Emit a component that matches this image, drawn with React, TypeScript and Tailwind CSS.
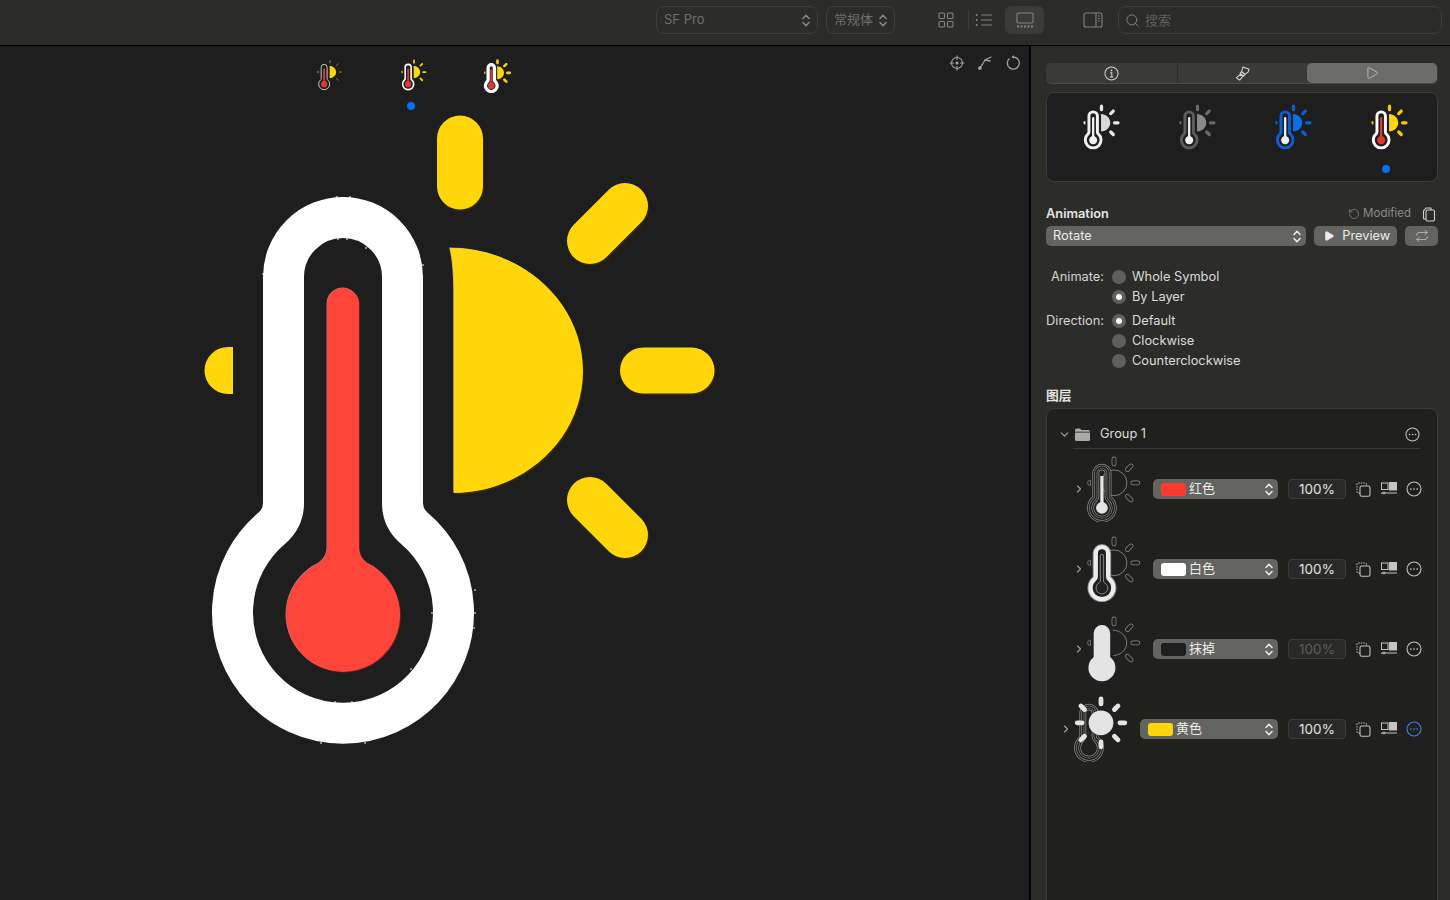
import React from "react";
import { Repeat, Search, ChevronRight, ChevronDown, RotateCcw, Play } from "lucide-react";

const THERMO = "M283.5 277 A59.5 59.5 0 0 1 402.5 277 V503 Q402.5 518 414 528 A110.5 110.5 0 1 1 272 528 Q283.5 518 283.5 503 Z";
const MERCURY = "M327 304 A16 16 0 0 1 359 304 V548 Q359 557 367 563 A57 57 0 1 1 319 563 Q327 557 327 548 Z";
const SUN = "M450 248 C 523 248 583 303 583 371 C 583 439 523 493 454 493 V290 Q454 265 450 248 Z";
const SUN_ARC = "M450 248 C 523 248 583 303 583 371 C 583 439 523 493 454 493";
const RAYS = "M460 138.5 V186.5 M590 241 L625 206 M643 370.5 H691.5 M590 500 L625 535";
const LEFT_RAY = "M233 347 H228 A23.5 23.5 0 0 0 228 394 H233 Z";
const BG = "#1e1e1e";
const CARD = "#20201e";
const LINE = "#8e8e8c";
const DOTS: [number, number][] = [
  [337, 197], [350, 197], [338, 239], [347, 239], [366, 248], [263, 274], [423, 265], [475, 590], [475, 613], [474, 628],
  [432, 613], [321, 743], [365, 743], [335, 702], [352, 702], [411, 669],
];

type SymProps = {
  w: number; h: number; thermo: string; weight: number; merc: string; sun: string; ray: string;
  rayWeight?: number; mercStem?: boolean; className?: string;
};

function Sym({ w, h, thermo, weight, merc, sun, ray, rayWeight = 46, mercStem, className = "" }: SymProps) {
  return (
    <svg viewBox="200 110 520 640" width={w} height={h} className={className}>
      <path d={THERMO} fill={BG} stroke={thermo} strokeWidth={weight} />
      {mercStem ? (
        <>
          <path d="M343 304 V600" stroke={merc} strokeWidth={36} fill="none" />
          <circle cx={343} cy={613} r={62} fill={merc} />
        </>
      ) : (
        <path d={MERCURY} fill={merc} />
      )}
      <path d={SUN} fill={sun} />
      <path d={RAYS} stroke={ray} strokeWidth={rayWeight} strokeLinecap="round" fill="none" />
      <path d={LEFT_RAY} fill={ray} />
    </svg>
  );
}

function Rings() {
  return (
    <>
      <path d={THERMO} fill="none" stroke={LINE} strokeWidth={66} />
      <path d={THERMO} fill="none" stroke={CARD} strokeWidth={52} />
      <path d={THERMO} fill="none" stroke={LINE} strokeWidth={28} />
      <path d={THERMO} fill="none" stroke={CARD} strokeWidth={16} />
    </>
  );
}

function RayOutline() {
  return (
    <>
      <path d={RAYS} stroke={LINE} strokeWidth={46} strokeLinecap="round" fill="none" />
      <path d={RAYS} stroke={CARD} strokeWidth={32} strokeLinecap="round" fill="none" />
      <path d={LEFT_RAY} fill="none" stroke={LINE} strokeWidth={7} />
    </>
  );
}

function LayerPreview({ kind }: { kind: number }) {
  const disc = <circle cx={460} cy={370} r={125} fill="none" stroke={LINE} strokeWidth={8} />;
  return (
    <svg viewBox="200 110 520 640" width={54} height={66} className="shrink-0">
      {kind === 0 && (
        <>
          <RayOutline />
          {disc}
          <Rings />
          <path d="M343 304 V600" stroke="#e4e4e4" strokeWidth={32} />
          <circle cx={343} cy={613} r={57} fill="#e4e4e4" />
        </>
      )}
      {kind === 1 && (
        <>
          <RayOutline />
          {disc}
          <path d={THERMO} fill="none" stroke={LINE} strokeWidth={60} />
          <path d={THERMO} fill={CARD} stroke="#ececec" strokeWidth={41} />
          <path d={MERCURY} fill="none" stroke={LINE} strokeWidth={9} />
        </>
      )}
      {kind === 2 && (
        <>
          <RayOutline />
          <path d={SUN_ARC} fill="none" stroke={LINE} strokeWidth={8} />
          <path d={THERMO} fill="#e4e4e4" stroke="#e4e4e4" strokeWidth={41} />
        </>
      )}
      {kind === 3 && (
        <>
          <Rings />
          <circle cx={460} cy={370} r={120} fill="#e4e4e4" />
          <path d={RAYS} stroke="#e4e4e4" strokeWidth={46} strokeLinecap="round" fill="none" />
          <path d="M460 555 V603 M300 241 L265 206 M277 370.5 H229 M300 500 L265 535" stroke="#e4e4e4" strokeWidth={46} strokeLinecap="round" fill="none" />
        </>
      )}
    </svg>
  );
}

function UpDown({ className = "" }: { className?: string }) {
  return (
    <svg viewBox="0 0 10 15" width={10} height={15} fill="none" stroke="currentColor" strokeWidth={1.5} strokeLinecap="round" strokeLinejoin="round" className={className}>
      <path d="M2 5.500 L5 2.300 L8 5.500 M2 9.500 L5 12.700 L8 9.500" />
    </svg>
  );
}

function Ellipsis({ color = "#c4c4c2", size = 15 }: { color?: string; size?: number }) {
  return (
    <svg viewBox="0 0 16 16" width={size} height={size} fill="none" stroke={color} strokeWidth={1.1} className="shrink-0">
      <circle cx="8" cy="8" r="7" />
      <circle cx="4.800" cy="8" r="0.850" fill={color} stroke="none" />
      <circle cx="8" cy="8" r="0.850" fill={color} stroke="none" />
      <circle cx="11.200" cy="8" r="0.850" fill={color} stroke="none" />
    </svg>
  );
}

function CopyDashed() {
  return (
    <svg viewBox="0 0 15 15" width={15} height={15} fill="none" stroke="#c4c4c2" strokeWidth={1.1}>
      <path d="M4 11 H2.500 Q1 11 1 9.500 V2.500 Q1 1 2.500 1 H9 Q10.500 1 10.500 2.500 V4" strokeDasharray="1.4 1.1" />
      <rect x="4" y="4" width="10" height="10.300" rx="1.800" />
    </svg>
  );
}

function Arrange() {
  return (
    <svg viewBox="0 0 16 14" width={16} height={14} fill="none" stroke="#c4c4c2" strokeWidth={1}>
      <rect x="0.500" y="1" width="6.500" height="6.500" />
      <rect x="8.500" y="0.500" width="7" height="7.500" fill="#c4c4c2" />
      <path d="M0 11 H16" />
      <circle cx="3" cy="11" r="1" fill={CARD} />
    </svg>
  );
}

function FolderIcon() {
  return (
    <svg viewBox="0 0 15 13" width={15} height={13} fill="#a9a9a7">
      <path d="M0 2 Q0 0.500 1.500 0.500 H5 L6.500 2 H13.500 Q15 2 15 3.500 V3.800 H0 Z" />
      <path d="M0 4.500 H15 V11.500 Q15 13 13.500 13 H1.500 Q0 13 0 11.500 Z" />
    </svg>
  );
}

function Brush() {
  return (
    <svg viewBox="0 0 16 16" width={15} height={15} fill="none" stroke="#d8d8d6" strokeWidth={1.1} strokeLinejoin="round">
      <path d="M8.500 1 L15 3.500 L14 6.500 L10.500 9 L7 6 Z" />
      <path d="M7 6 L10.500 9 L9.200 10.800 L5.500 7.800 Z" />
      <path d="M5.800 9 L8.200 11 L5 15 L1.500 12.500 Z" />
    </svg>
  );
}

function ToolbarSelect({ label, cls }: { label: string; cls: string }) {
  return (
    <div className={`flex h-[28px] items-center justify-between rounded-lg border border-[#3d3e39] pl-[7px] pr-[6px] text-[13px] text-[#6f706b] ${cls}`}>
      <span>{label}</span>
      <UpDown className="text-[#8a8a86]" />
    </div>
  );
}

function Toolbar() {
  return (
    <div className="flex h-[46px] shrink-0 items-center border-b border-black bg-[#2c2d28] pb-[5px] pl-[656px]">
      <ToolbarSelect label="SF Pro" cls="w-[162px]" />
      <ToolbarSelect label="常规体" cls="ml-[8px] w-[69px]" />
      <svg viewBox="0 0 16 16" width={16} height={16} fill="none" stroke="#83847f" strokeWidth={1.1} className="ml-[43px]">
        <rect x="1" y="1" width="5.500" height="5.500" rx="1" />
        <rect x="9.500" y="1" width="5.500" height="5.500" rx="1" />
        <rect x="1" y="9.500" width="5.500" height="5.500" rx="1" />
        <rect x="9.500" y="9.500" width="5.500" height="5.500" rx="1" />
      </svg>
      <div className="ml-[14px] h-[20px] w-px bg-[#3d3e39]" />
      <svg viewBox="0 0 18 14" width={18} height={14} fill="none" stroke="#83847f" strokeWidth={1.1} className="ml-[6px]">
        <path d="M6 2 H17 M6 7 H17 M6 12 H17" />
        <path d="M1 2 H2.500 M1 7 H2.500 M1 12 H2.500" strokeWidth={1.8} />
      </svg>
      <div className="ml-[12px] flex h-[28px] w-[39px] items-center justify-center rounded-md bg-[#3b3c38]">
        <svg viewBox="0 0 20 16" width={20} height={16} fill="none" stroke="#83847f" strokeWidth={1.1}>
          <rect x="2" y="1" width="16" height="10" rx="1.500" />
          <path d="M2 14.500 H18" strokeWidth={2} strokeDasharray="2 1.500" />
        </svg>
      </div>
      <svg viewBox="0 0 20 16" width={20} height={16} fill="none" stroke="#83847f" strokeWidth={1.1} className="ml-[39px]">
        <rect x="1" y="1" width="18" height="14" rx="2" />
        <path d="M13 1 V15" />
        <path d="M15 4 H17 M15 6.500 H17 M15 9 H17" />
      </svg>
      <div className="ml-[15px] flex h-[28px] w-[324px] items-center rounded-lg border border-[#3d3e39] pl-[6px] text-[13px] text-[#5f605b]">
        <Search size={15} strokeWidth={1.5} className="text-[#83847f]" />
        <span className="ml-[5px] pt-[1px]">搜索</span>
      </div>
    </div>
  );
}

function Canvas() {
  return (
    <div className="relative flex-1 overflow-hidden bg-[#1e1e1e]">
      <div className="flex items-start pl-[317px] pt-[13px]">
        <Sym w={26} h={32} thermo="#d8d8d8" weight={18} merc="#e03a34" mercStem sun="#ffd60a" ray="#9a8a3a" rayWeight={18} />
        <div className="ml-[58px] flex flex-col">
          <Sym w={26} h={32} thermo="#ffffff" weight={32} merc="#e03a34" mercStem sun="#ffd60a" ray="#f2cc10" rayWeight={36} />
          <div className="ml-[6px] mt-[11px] h-[8px] w-[8px] rounded-full bg-[#0a6cf0]" />
        </div>
        <div className="ml-[56px] w-[30px]">
          <Sym w={29} h={34} thermo="#ffffff" weight={62} merc="#e03a34" mercStem sun="#ffd60a" ray="#f2cc10" rayWeight={50} />
        </div>
      </div>
      <svg viewBox="200 110 520 640" width={520} height={640} className="absolute left-[200px] top-[64px]">
        <path d={THERMO} fill="#1e1e1e" stroke="#ffffff" strokeWidth={41} />
        <path d={MERCURY} fill="#8a2018" transform="translate(0.800 0.800)" />
        <path d={MERCURY} fill="#8a8a8a" transform="translate(-0.500 -0.500)" />
        <path d={MERCURY} fill="#ff453a" />
        <path d={SUN} fill="#3a2c00" transform="translate(1 1.500)" />
        <path d={SUN} fill="#b8b090" transform="translate(-0.800 -0.500)" />
        <path d={SUN} fill="#ffd60a" />
        <path d={RAYS} stroke="#3a2c00" strokeWidth={46} strokeLinecap="round" fill="none" transform="translate(1 1.500)" />
        <path d={RAYS} stroke="#ffd60a" strokeWidth={46} strokeLinecap="round" fill="none" />
        <path d={LEFT_RAY} fill="#ffd60a" />
        {DOTS.map(([x, y]) => (
          <rect key={`${x}-${y}`} x={x - 0.7} y={y - 0.7} width={1.4} height={1.4} fill="#ffffff" />
        ))}
      </svg>
      <div className="absolute right-[8px] top-[9px] flex items-center gap-[12px] text-[#a2a2a0]">
        <svg viewBox="0 0 16 16" width={16} height={16} fill="none" stroke="currentColor" strokeWidth={1.1}>
          <circle cx="8" cy="8" r="5.500" />
          <path d="M8 0.500 V5 M8 11 V15.500 M0.500 8 H5 M11 8 H15.500" />
          <circle cx="8" cy="8" r="1" fill="currentColor" />
        </svg>
        <svg viewBox="0 0 16 16" width={16} height={16} fill="none" stroke="currentColor" strokeWidth={1.3} strokeLinecap="round">
          <path d="M2 14 Q6 9 8 5 Q10 4 14 2" />
          <path d="M8 5 L13 6" />
          <circle cx="3" cy="13" r="1.200" fill="currentColor" />
        </svg>
        <svg viewBox="0 0 16 16" width={16} height={16} fill="none" stroke="currentColor" strokeWidth={1.3}>
          <path d="M4.500 3.400 A6 6 0 1 0 9 2.100" />
          <path d="M9 0.300 L6.400 2 L9 3.800 Z" fill="currentColor" stroke="none" />
        </svg>
      </div>
    </div>
  );
}

function Radio({ on, label, head }: { on?: boolean; label: string; head?: string }) {
  return (
    <div className="flex h-[20px] items-center">
      <span className="w-[58px] whitespace-nowrap text-right text-[#d6d6d4]">{head}</span>
      <span className="ml-[8px] flex h-[14px] w-[14px] items-center justify-center rounded-full bg-[#5f5f5c]">
        {on && <span className="h-[6px] w-[6px] rounded-full bg-white" />}
      </span>
      <span className="ml-[6px] text-[#dcdcda]">{label}</span>
    </div>
  );
}

function Layer({ kind, swatch, name, dim, active }: { kind: number; swatch: string; name: string; dim?: boolean; active?: boolean }) {
  const last = kind === 3;
  return (
    <div className={`flex h-[80px] items-center pr-[15px] ${last ? "pl-[13px]" : "pl-[26px]"}`}>
      <ChevronRight size={12} strokeWidth={2.2} className="text-[#a4a4a2]" />
      <div className="ml-[2px]">
        <LayerPreview kind={kind} />
      </div>
      <div className="ml-[12px] flex h-[20px] flex-1 items-center rounded-[5px] bg-[#636360] pl-[8px] pr-[4px] text-[13px] text-[#ececea]">
        <span className="h-[13px] w-[25px] rounded-[3px]" style={{ backgroundColor: swatch }} />
        <span className="ml-[3px] flex-1">{name}</span>
        <UpDown className="text-[#ececea]" />
      </div>
      <div className={`ml-[10px] flex h-[20px] w-[58px] items-center justify-center rounded-[4px] border border-[#3d3d3b] bg-[#2a2a28] pt-[1px] text-[13.5px] ${dim ? "text-[#5e5e5c]" : "text-[#e4e4e2]"}`}>
        100%
      </div>
      <div className="ml-[10px]"><CopyDashed /></div>
      <div className="ml-[10px]"><Arrange /></div>
      <div className="ml-[9px]"><Ellipsis size={16} color={active ? "#3d82e8" : "#c4c4c2"} /></div>
    </div>
  );
}

function Panel() {
  return (
    <div className="flex w-[421px] shrink-0 flex-col overflow-hidden border-l-2 border-black bg-[#2c2c28] pl-[15px] pr-[12px] pt-[17px] text-[12.8px]">
      <div className="flex h-[21px] shrink-0 rounded-[5px] border-b border-[#4a4a47] bg-[#3a3a37]">
        <div className="flex w-[131px] items-center justify-center text-[#d4d4d2]">
          <svg viewBox="0 0 16 16" width={15} height={15} fill="none" stroke="currentColor" strokeWidth={1.1}>
            <circle cx="8" cy="8" r="7" />
            <path d="M6.500 7.200 H8.300 V11.800 M6.300 11.800 H10" />
            <circle cx="8" cy="4.700" r="0.900" fill="currentColor" stroke="none" />
          </svg>
        </div>
        <div className="flex w-[130px] items-center justify-center border-l border-[#2f2f2c]"><Brush /></div>
        <div className="flex w-[130px] items-center justify-center rounded-[5px] bg-[#6d6d68] text-[#d8d8d6]">
          <Play size={14} strokeWidth={1.2} />
        </div>
      </div>
      <div className="mt-[8px] flex h-[90px] shrink-0 rounded-[8px] border border-[#3b3b38] bg-[#1e1e1e] pl-[36px] pt-[11px]">
        <div className="w-[96px] shrink-0"><Sym w={37} h={46} thermo="#f2f2f2" weight={41} merc="#f2f2f2" sun="#d8d8d8" ray="#e8e8e8" /></div>
        <div className="w-[96px] shrink-0"><Sym w={37} h={46} thermo="#5c5c5c" weight={41} merc="#f0f0f0" sun="#8a8a8a" ray="#6a6a6a" /></div>
        <div className="w-[96px] shrink-0"><Sym w={37} h={46} thermo="#0a5fd8" weight={41} merc="#f0f0f0" sun="#0a70e8" ray="#0a5fd8" /></div>
        <div className="w-[37px] shrink-0">
          <Sym w={37} h={46} thermo="#ffffff" weight={41} merc="#e03a34" sun="#ffd60a" ray="#f2c80f" />
          <div className="ml-[11px] mt-[15px] h-[8px] w-[8px] rounded-full bg-[#0a6cf0]" />
        </div>
      </div>
      <div className="mt-[24px] flex h-[16px] shrink-0 items-center">
        <span className="flex-1 font-semibold text-[#e4e4e2]">Animation</span>
        <RotateCcw size={12} strokeWidth={1.4} className="text-[#8c8c8a]" />
        <span className="ml-[3px] text-[11.5px] text-[#8c8c8a]">Modified</span>
        <svg viewBox="0 0 14 15" width={14} height={15} fill="none" stroke="#cfcfcd" strokeWidth={1.1} className="ml-[11px] mr-[2px]">
          <rect x="4" y="3" width="8.500" height="11" rx="1.500" />
          <path d="M4 12 H2.500 Q1.500 12 1.500 11 V4 L4 1 H9 V3" />
        </svg>
      </div>
      <div className="mt-[4px] flex h-[20px] shrink-0 items-center">
        <div className="flex h-full w-[261px] items-center justify-between rounded-[5px] bg-[#636360] pl-[7px] pr-[4px] text-[#ececea]">
          <span>Rotate</span>
          <UpDown />
        </div>
        <div className="ml-[8px] flex h-full w-[83px] items-center rounded-[5px] bg-[#636360] pl-[9px] text-[#ececea]">
          <Play size={12} fill="#ececea" strokeWidth={1} />
          <span className="ml-[7px]">Preview</span>
        </div>
        <div className="ml-[8px] flex h-full w-[33px] items-center justify-center rounded-[5px] bg-[#636360] text-[#b8b8b6]">
          <Repeat size={14} strokeWidth={1.5} />
        </div>
      </div>
      <div className="mt-[21px] shrink-0">
        <Radio head="Animate:" label="Whole Symbol" />
        <Radio on label="By Layer" />
        <div className="h-[4px]" />
        <Radio on head="Direction:" label="Default" />
        <Radio label="Clockwise" />
        <Radio label="Counterclockwise" />
      </div>
      <div className="mt-[17px] h-[16px] shrink-0 font-semibold leading-[16px] text-[#e4e4e2]">图层</div>
      <div className="mt-[4px] h-[600px] shrink-0 rounded-[8px] border border-[#3b3b38] bg-[#20201e] pt-[12px]">
        <div className="relative ml-[26px] mr-[17px] flex h-[28px] items-center border-b border-[#3b3b38] pb-[1px]">
          <ChevronDown size={13} strokeWidth={2} className="absolute -left-[15px] text-[#a4a4a2]" />
          <span className="ml-[2px]"><FolderIcon /></span>
          <span className="ml-[10px] flex-1 text-[#dcdcda]">Group 1</span>
          <Ellipsis />
        </div>
        <Layer kind={0} swatch="#ff3b30" name="红色" />
        <Layer kind={1} swatch="#ffffff" name="白色" />
        <Layer kind={2} swatch="#1e1e1e" name="抹掉" dim />
        <Layer kind={3} swatch="#ffd60a" name="黄色" active />
      </div>
    </div>
  );
}

export default function App() {
  return (
    <div className="flex h-[900px] w-[1450px] flex-col overflow-hidden bg-[#1e1e1e] font-['Inter','Noto_Sans_CJK_SC',sans-serif]">
      <Toolbar />
      <div className="flex min-h-0 flex-1">
        <Canvas />
        <Panel />
      </div>
    </div>
  );
}
